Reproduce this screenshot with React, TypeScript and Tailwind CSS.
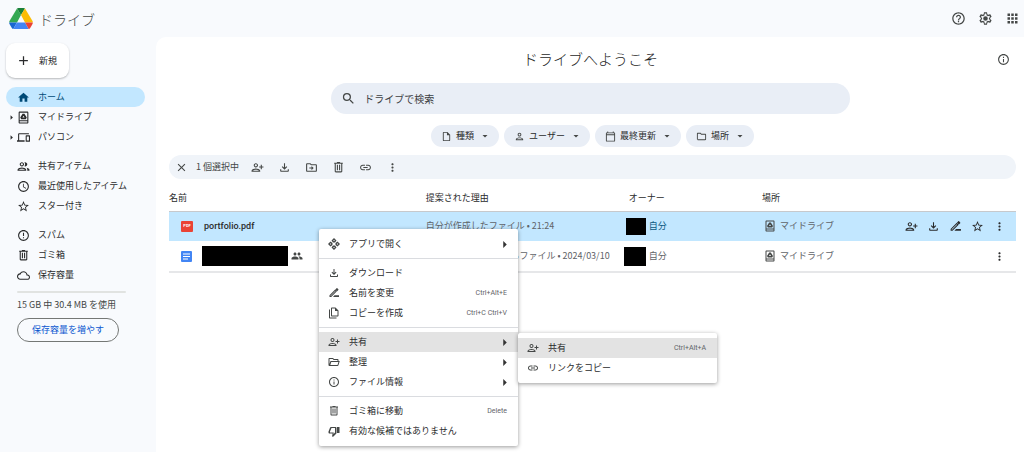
import React from 'react';
import {
  MdAccessTime,
  MdAdd,
  MdApps,
  MdArrowDropDown,
  MdArrowRight,
  MdClose,
  MdErrorOutline,
  MdHelpOutline,
  MdHome,
  MdInfoOutline,
  MdLink,
  MdMoreVert,
  MdPeople,
  MdSearch,
  MdStarBorder,
} from 'react-icons/md';

type IconProps = { className?: string };
type IconType = React.ComponentType<IconProps>;

const glyph = (d: string): IconType =>
  function Glyph({ className }: IconProps) {
    return (
      <svg viewBox="0 0 24 24" fill="currentColor" fillRule="evenodd" className={className} aria-hidden="true">
        <path d={d} />
      </svg>
    );
  };

const PersonAdd = glyph(
  'M9 12c2.210 0 4-1.790 4-4s-1.790-4-4-4-4 1.790-4 4 1.790 4 4 4zm0-6c1.100 0 2 .9 2 2s-.9 2-2 2-2-.9-2-2 .9-2 2-2zM1 18v2h16v-2c0-2.660-5.330-4-8-4s-8 1.340-8 4zm2 0c.2-.710 3.300-2 6-2s5.780 1.280 6 2H3zM20 10V7h-2v3h-3v2h3v3h2v-3h3v-2z',
);
const Download = glyph('M11 4h2v8.200l2.600-2.600L17 11l-5 5-5-5 1.400-1.400 2.600 2.600V4zM4 15h2v3h12v-3h2v3c0 1.100-.9 2-2 2H6c-1.100 0-2-.9-2-2v-3z');
const FolderMove = glyph(
  'M20 6h-8l-2-2H4c-1.100 0-2 .9-2 2v12c0 1.100.9 2 2 2h16c1.100 0 2-.9 2-2V8c0-1.100-.9-2-2-2zm0 12H4V6h5.170l2 2H20v10zM12 9l4 4-4 4v-3H8v-2h4V9z',
);
const Trash = glyph(
  'M15 3V2H9v1H4v2h1v14c0 1.100.9 2 2 2h10c1.100 0 2-.9 2-2V5h1V3h-5zm2 16H7V5h10v14zM9 7h2v10H9V7zm4 0h2v10h-2V7z',
);
const Rename = glyph(
  'M3 16.500V20h3.500L17.800 8.700l-3.500-3.500L3 16.500zM5.700 18H5v-.7l9.300-9.300.7.7L5.700 18zM20.700 5.800c.4-.4.4-1 0-1.400l-2.100-2.100c-.4-.4-1-.4-1.400 0l-2.500 2.500 3.500 3.500 2.500-2.500zM13 16.500h9V20H10l3-3.500z',
);
const PeopleOutline = glyph(
  'M9 12c2.200 0 4-1.800 4-4s-1.800-4-4-4-4 1.800-4 4 1.800 4 4 4zm0-6c1.100 0 2 .9 2 2s-.9 2-2 2-2-.9-2-2 .9-2 2-2zM1 18v2h16v-2c0-2.700-5.300-4-8-4s-8 1.300-8 4zm2 0c.2-.7 3.300-2 6-2s5.800 1.300 6 2H3zM15 12c2.200 0 4-1.800 4-4s-1.800-4-4-4c-.5 0-1 .1-1.400.3.900 1 1.400 2.300 1.400 3.700s-.5 2.700-1.400 3.700c.4.200.9.3 1.400.3zM17.500 14.400c1 .9 1.500 2.100 1.500 3.600v2h4v-2c0-1.900-2.800-3.100-5.500-3.600z',
);
const Devices = glyph('M4 6h18V4H4c-1.100 0-2 .9-2 2v11H0v3h14v-3H4V6zm19 2h-6c-.6 0-1 .4-1 1v10c0 .6.4 1 1 1h6c.6 0 1-.4 1-1V9c0-.6-.4-1-1-1zm-1 9.500h-4V10h4v7.500z');
const Cloud = glyph(
  'M19.350 10.040C18.670 6.590 15.640 4 12 4 9.110 4 6.600 5.640 5.350 8.040 2.340 8.360 0 10.910 0 14c0 3.310 2.690 6 6 6h13c2.760 0 5-2.240 5-5 0-2.640-2.050-4.780-4.650-4.960zM19 18H6c-2.210 0-4-1.790-4-4s1.790-4 4-4h.71C7.370 7.690 9.480 6 12 6c3.040 0 5.500 2.460 5.500 5.500v.5H19c1.660 0 3 1.340 3 3s-1.340 3-3 3z',
);
const DriveBox = glyph(
  'M5 1h14c1.100 0 2 .9 2 2v18c0 1.100-.9 2-2 2H5c-1.100 0-2-.9-2-2V3c0-1.100.9-2 2-2zm0 2v14h14V3H5zm0 16v2h14v-2H5zM10.300 5h3.400l4.300 7-1.700 3H7.700L6 12l4.300-7zm1.700 3.700L10 12h4l-2-3.300z',
);
const FileIcon = glyph('M14 2H6c-1.100 0-2 .9-2 2v16c0 1.100.9 2 2 2h12c1.100 0 2-.9 2-2V8l-6-6zM6 20V4h7v5h5v11H6z');
const Person = glyph(
  'M12 12c2.200 0 4-1.800 4-4s-1.800-4-4-4-4 1.800-4 4 1.800 4 4 4zm0-6c1.100 0 2 .9 2 2s-.9 2-2 2-2-.9-2-2 .9-2 2-2zM4 18v2h16v-2c0-2.700-5.300-4-8-4s-8 1.300-8 4zm2 0c.2-.7 3.300-2 6-2s5.800 1.300 6 2H6z',
);
const Calendar = glyph('M20 3h-1V1h-2v2H7V1H5v2H4c-1.100 0-2 .9-2 2v16c0 1.100.9 2 2 2h16c1.100 0 2-.9 2-2V5c0-1.100-.9-2-2-2zm0 18H4V9h16v12zm0-14H4V5h16v2z');
const Folder = glyph('M20 6h-8l-2-2H4c-1.100 0-2 .9-2 2v12c0 1.100.9 2 2 2h16c1.100 0 2-.9 2-2V8c0-1.100-.9-2-2-2zm0 12H4V6h5.200l2 2H20v10z');
const FolderOpen = glyph(
  'M10 4H3c-1.100 0-2 .9-2 2v12c0 1.100.9 2 2 2h16c.9 0 1.700-.6 1.900-1.400L23.500 10H21V8c0-1.100-.9-2-2-2h-7l-2-2zM3 6h6.200l2 2H19v2H5L3 16V6zm3.500 6h14.300l-1.800 6H4.600l1.900-6z',
);
const OpenWith = glyph(
  'M12 0l5 5-3 4h-4L7 5l5-5zm0 3.500L10.500 5 12 6.500 13.500 5 12 3.500zM12 24l-5-5 3-4h4l3 4-5 5zm0-3.500l1.500-1.500-1.500-1.500-1.500 1.500 1.500 1.500zM0 12l5-5 4 3v4l-4 3-5-5zm3.500 0L5 13.500 6.500 12 5 10.500 3.500 12zM24 12l-5 5-4-3v-4l4-3 5 5zm-3.500 0L19 10.500 17.500 12l1.500 1.500 1.500-1.500z',
);
const CopyFile = glyph(
  'M15 1H8c-1.100 0-2 .9-2 2v14c0 1.100.9 2 2 2h11c1.100 0 2-.9 2-2V7l-6-6zM8 17V3h6v5h5v9H8zM4 5H2v16c0 1.100.9 2 2 2h13v-2H4V5z',
);
const ThumbDown = glyph(
  'M10.900 18.300L11.500 15H4v-2l3-7h7v9l-3.100 3.300zM15 4H6c-.8 0-1.500.5-1.800 1.200l-3 7.100c-.1.200-.2.500-.2.700v2c0 1.100.9 2 2 2h6.300l-1 4.600c-.1.500 0 .9.300 1.200l1.200 1.200 6.600-6.600c.4-.4.6-.9.6-1.400V6c0-1.100-.9-2-2-2zM18 4h5v12h-5V4z',
);
const Gear = glyph(
  'M19.430 12.980c.04-.32.07-.64.07-.98s-.03-.66-.07-.98l2.110-1.650c.19-.15.24-.42.12-.64l-2-3.460c-.12-.22-.39-.3-.61-.22l-2.490 1c-.52-.4-1.080-.73-1.690-.98l-.38-2.650C14.460 2.180 14.250 2 14 2h-4c-.25 0-.46.18-.49.42l-.38 2.650c-.61.25-1.170.59-1.690.98l-2.490-1c-.23-.09-.49 0-.61.22l-2 3.460c-.13.22-.07.49.12.64l2.110 1.650c-.04.32-.07.65-.07.98s.03.66.07.98l-2.110 1.650c-.19.15-.24.42-.12.64l2 3.460c.12.22.39.3.61.22l2.490-1c.52.4 1.080.73 1.690.98l.38 2.650c.03.24.24.42.49.42h4c.25 0 .46-.18.49-.42l.38-2.650c.61-.25 1.170-.59 1.690-.98l2.490 1c.23.09.49 0 .61-.22l2-3.460c.12-.22.07-.49-.12-.64l-2.110-1.650zM17.500 12c0 .3 0 .6-.1.900l1.800 1.700-1 1.800-2.400-.7c-.6.500-1.300.9-2 1.100L13.200 20h-2.400l-.6-3.200c-.7-.2-1.400-.6-2-1.100l-2.400.7-1-1.800 1.800-1.700c-.1-.6-.1-1.200 0-1.800L4.800 9.400l1-1.800 2.400.7c.6-.5 1.300-.9 2-1.100l.6-3.200h2.400l.6 3.200c.7.200 1.400.6 2 1.100l2.400-.7 1 1.800-1.800 1.700c.1.300.1.600.1.900zM12 8.300a3.700 3.700 0 1 0 0 7.400 3.700 3.700 0 0 0 0-7.400z',
);

function DriveLogo() {
  return (
    <svg viewBox="0 0 24 21" className="h-[21px] w-6" aria-hidden="true">
      <path d="M8 .5L12 7 8 14.500H.3q-.2-.8.200-1.500Z" fill="#34a853" />
      <path d="M8 .5Q8.500 0 9.500 0h5q1 0 1.500.5L12 7Z" fill="#188038" />
      <path d="M16 .5l7.500 12.500q.4.700.2 1.500H16L12 7Z" fill="#fbbc04" />
      <path d="M.3 14.500H8L4.300 21q-1-.2-1.500-1L.5 16q-.4-.8-.2-1.500Z" fill="#1967d2" />
      <path d="M8 14.500h8l3.700 6.500H4.300Z" fill="#4285f4" />
      <path d="M16 14.500h7.700q.2.800-.2 1.500l-2.300 4q-.5.800-1.500 1Z" fill="#ea4335" />
    </svg>
  );
}

type NavItem = { label: string; icon: IconType; expandable?: boolean; active?: boolean };

const navGroups: NavItem[][] = [
  [
    { label: 'ホーム', icon: MdHome, active: true },
    { label: 'マイドライブ', icon: DriveBox, expandable: true },
    { label: 'パソコン', icon: Devices, expandable: true },
  ],
  [
    { label: '共有アイテム', icon: PeopleOutline },
    { label: '最近使用したアイテム', icon: MdAccessTime },
    { label: 'スター付き', icon: MdStarBorder },
  ],
  [
    { label: 'スパム', icon: MdErrorOutline },
    { label: 'ゴミ箱', icon: Trash },
    { label: '保存容量', icon: Cloud },
  ],
];

function Sidebar() {
  return (
    <aside className="w-[156px] shrink-0 pl-1.5 pr-[11px] pt-1.5">
      <button className="flex h-[35px] items-center gap-2 rounded-[9px] bg-white pl-2.5 pr-3 shadow-[0_1px_2px_rgba(60,64,67,0.35)]">
        <MdAdd className="size-[15px]" />
        新規
      </button>
      <nav className="mt-[9px] flex flex-col gap-[9px]">
        {navGroups.map((group, i) => (
          <ul key={i}>
            {group.map(({ label, icon: Icon, expandable, active }) => (
              <li key={label}>
                <a
                  href="#"
                  className={
                    active
                      ? 'flex h-5 items-center rounded-full bg-[#c2e7ff] text-[#004a77]'
                      : 'flex h-5 items-center rounded-full'
                  }
                >
                  <span className="flex w-[11px] shrink-0 justify-end">
                    {expandable && <MdArrowRight className="size-[11px] shrink-0" />}
                  </span>
                  <Icon className="size-[13px] shrink-0" />
                  <span className="pl-2">{label}</span>
                </a>
              </li>
            ))}
          </ul>
        ))}
      </nav>
      <div className="ml-[11px] mr-[19px] mt-1.5 h-0.5 rounded bg-[#e1e3e1]" />
      <p className="ml-[11px] mt-1 leading-4 text-[#444746]">15 GB 中 30.4 MB を使用</p>
      <button className="ml-[11px] mt-[5px] h-6 rounded-full border border-[#747775] px-3.5 text-[#0b57d0]">
        保存容量を増やす
      </button>
    </aside>
  );
}

const filters: { label: string; icon: IconType }[] = [
  { label: '種類', icon: FileIcon },
  { label: 'ユーザー', icon: Person },
  { label: '最終更新', icon: Calendar },
  { label: '場所', icon: Folder },
];

const toolbarActions: { label: string; icon: IconType }[] = [
  { label: '共有', icon: PersonAdd },
  { label: 'ダウンロード', icon: Download },
  { label: '移動', icon: FolderMove },
  { label: 'ゴミ箱に移動', icon: Trash },
  { label: 'リンクをコピー', icon: MdLink },
  { label: 'その他の操作', icon: MdMoreVert },
];

const rowActions: { label: string; icon: IconType }[] = [
  { label: '共有', icon: PersonAdd },
  { label: 'ダウンロード', icon: Download },
  { label: '名前を変更', icon: Rename },
  { label: 'スターを付ける', icon: MdStarBorder },
  { label: 'その他の操作', icon: MdMoreVert },
];

function IconButton({ label, icon: Icon }: { label: string; icon: IconType }) {
  return (
    <button aria-label={label} className="shrink-0">
      <Icon className="size-[13px]" />
    </button>
  );
}

function PlaceCell({ actions }: { actions: { label: string; icon: IconType }[] }) {
  return (
    <div className="flex items-center pl-0.5 pr-2.5">
      <DriveBox className="size-3 shrink-0 text-[#444746]" />
      <span className="pl-1 text-[#5f6368]">マイドライブ</span>
      <div className="ml-auto flex gap-[9px]">
        {actions.map((a) => (
          <IconButton key={a.label} {...a} />
        ))}
      </div>
    </div>
  );
}

function FileTable() {
  return (
    <table className="mt-[7px] w-full table-fixed border-collapse text-left">
      <thead>
        <tr className="h-[25px] border-b border-[#c7c9cc]">
          <th className="w-[30.3%] font-normal">名前</th>
          <th className="w-[23.4%] font-normal">提案された理由</th>
          <th className="w-[16.3%] pl-[5px] font-normal">オーナー</th>
          <th className="w-[30%] font-normal">場所</th>
        </tr>
      </thead>
      <tbody>
        <tr className="h-[30px] bg-[#c2e7ff]">
          <td>
            <div className="flex items-center pl-3">
              <span className="flex h-[11px] w-3 items-center justify-center rounded-[1px] bg-[#ea4335] font-[Roboto] text-[4px] font-bold text-white">
                PDF
              </span>
              <span className="pl-[11px] font-[Roboto] text-[9px] font-medium">portfolio.pdf</span>
            </div>
          </td>
          <td className="whitespace-nowrap text-[#5f6368]">自分が作成したファイル • 21:24</td>
          <td>
            <div className="flex items-center gap-[3px] text-[#0b5781]">
              <span className="flex w-[22px] justify-end">
                <span className="h-[17px] w-5 bg-black" />
              </span>
              自分
            </div>
          </td>
          <td>
            <PlaceCell actions={rowActions} />
          </td>
        </tr>
        <tr className="h-[31px] border-b-2 border-[#e6e7e9]">
          <td>
            <div className="flex items-center pl-3">
              <svg viewBox="0 0 11 11" className="size-[11px]" aria-hidden="true">
                <rect width="11" height="11" rx="1" fill="#4285f4" />
                <path d="M2 3h7M2 5.500h7M2 8h5" stroke="#fff" strokeWidth="1" />
              </svg>
              <span className="ml-2.5 h-5 w-[86px] bg-black" />
              <MdPeople className="ml-[3px] size-3 text-[#444746]" />
            </div>
          </td>
          <td className="whitespace-nowrap text-[#5f6368]">
            <div className="flex w-[184px] justify-end">自分が所有しているファイル • 2024/03/10</div>
          </td>
          <td>
            <div className="flex items-center gap-[3px] text-[#5f6368]">
              <span className="h-[19px] w-[22px] bg-black" />
              自分
            </div>
          </td>
          <td>
            <PlaceCell actions={rowActions.slice(-1)} />
          </td>
        </tr>
      </tbody>
    </table>
  );
}

type MenuEntry = { label: string; icon: IconType; shortcut?: string; submenu?: MenuEntry[]; arrow?: boolean };

const menuGroups: MenuEntry[][] = [
  [{ label: 'アプリで開く', icon: OpenWith, arrow: true }],
  [
    { label: 'ダウンロード', icon: Download },
    { label: '名前を変更', icon: Rename, shortcut: 'Ctrl+Alt+E' },
    { label: 'コピーを作成', icon: CopyFile, shortcut: 'Ctrl+C Ctrl+V' },
  ],
  [
    {
      label: '共有',
      icon: PersonAdd,
      arrow: true,
      submenu: [
        { label: '共有', icon: PersonAdd, shortcut: 'Ctrl+Alt+A' },
        { label: 'リンクをコピー', icon: MdLink },
      ],
    },
    { label: '整理', icon: FolderOpen, arrow: true },
    { label: 'ファイル情報', icon: MdInfoOutline, arrow: true },
  ],
  [
    { label: 'ゴミ箱に移動', icon: Trash, shortcut: 'Delete' },
    { label: '有効な候補ではありません', icon: ThumbDown },
  ],
];

const panel = 'absolute w-[199px] rounded-[2px] bg-white py-[5px] shadow-[0_1px_4px_rgba(0,0,0,0.4)]';

function MenuRow({ entry, highlighted }: { entry: MenuEntry; highlighted?: boolean }) {
  const Icon = entry.icon;
  return (
    <li role="none" className="relative">
      <button
        role="menuitem"
        className={
          highlighted
            ? 'flex h-5 w-full items-center bg-[#e3e3e3] pl-[9px] pr-[11px]'
            : 'flex h-5 w-full items-center pl-[9px] pr-[11px]'
        }
      >
        <Icon className="size-3 shrink-0 text-[#444746]" />
        <span className="pl-[9px]">{entry.label}</span>
        {entry.shortcut && (
          <span className="ml-auto font-[Roboto] text-[7px] text-[#5f6368]">{entry.shortcut}</span>
        )}
        {entry.arrow && (
          <svg viewBox="0 0 4 8" className="ml-auto h-[7px] w-1" aria-hidden="true">
            <path d="M0 0l4 4-4 4z" fill="#333" />
          </svg>
        )}
      </button>
      {entry.submenu && (
        <ul role="menu" className={`${panel} left-full top-px`}>
          {entry.submenu.map((sub, i) => (
            <MenuRow key={sub.label} entry={sub} highlighted={i === 0} />
          ))}
        </ul>
      )}
    </li>
  );
}

function ContextMenu() {
  return (
    <div role="menu" className={`${panel} left-[319px] top-[229px]`}>
      {menuGroups.map((group, i) => (
        <React.Fragment key={i}>
          {i > 0 && <hr className="my-1 border-[#dadce0]" />}
          <ul role="none">
            {group.map((entry) => (
              <MenuRow key={entry.label} entry={entry} highlighted={!!entry.submenu} />
            ))}
          </ul>
        </React.Fragment>
      ))}
    </div>
  );
}

export default function App() {
  return (
    <div className="relative flex min-h-screen flex-col bg-[#f8fafd] font-['Noto_Sans_CJK_JP',sans-serif] text-[9px] leading-3 text-[#2a2b2c]">
      <header className="flex h-[37px] items-center pl-[9px] pr-1">
        <DriveLogo />
        <span className="pl-1.5 text-[14px] font-light leading-5 text-[#444746]">ドライブ</span>
        <div className="ml-auto flex gap-3 text-[#444746]">
          <button aria-label="サポート">
            <MdHelpOutline className="size-[15px]" />
          </button>
          <button aria-label="設定">
            <Gear className="size-[15px]" />
          </button>
          <button aria-label="アプリ">
            <MdApps className="size-[15px]" />
          </button>
        </div>
      </header>
      <div className="flex flex-1">
        <Sidebar />
        <main className="min-w-0 flex-1 rounded-tl-[10px] bg-white pl-[13px] pr-2">
          <div className="pr-1">
            <div className="grid grid-cols-[1fr_auto_1fr] items-center pt-2.5">
              <span />
              <h1 className="text-[15px] font-light leading-6 text-[#1f1f1f]">ドライブへようこそ</h1>
              <button aria-label="詳細" className="mr-0.5 justify-self-end text-[#444746]">
                <MdInfoOutline className="size-[13px]" />
              </button>
            </div>
            <label className="mx-auto mt-3 flex h-[31px] w-[61.5%] items-center rounded-full bg-[#e9eef6] pl-2.5">
              <MdSearch className="size-[15px] shrink-0 text-[#444746]" />
              <input
                type="text"
                aria-label="ドライブで検索"
                placeholder="ドライブで検索"
                className="w-full bg-transparent pl-2 text-[10px] outline-none placeholder:text-[#3c4043]"
              />
            </label>
          </div>
          <div className="mt-[11px] flex justify-center gap-[5px]">
            {filters.map(({ label, icon: Icon }) => (
              <button
                key={label}
                aria-haspopup="menu"
                className="flex h-[22px] items-center rounded-full bg-[#e9eef6] pl-2.5 pr-2"
              >
                <Icon className="size-[11px] text-[#444746]" />
                <span className="pl-1 pr-[5px]">{label}</span>
                <MdArrowDropDown className="size-3 text-[#444746]" />
              </button>
            ))}
          </div>
          <div className="mt-2 flex h-6 items-center rounded-full bg-[#f0f4f9] pl-1.5 text-[#444746]">
            <IconButton label="選択を解除" icon={MdClose} />
            <span className="pl-2 pr-3">1 個選択中</span>
            <div className="flex gap-3.5">
              {toolbarActions.map((a) => (
                <IconButton key={a.label} {...a} />
              ))}
            </div>
          </div>
          <FileTable />
        </main>
      </div>
      <ContextMenu />
    </div>
  );
}
